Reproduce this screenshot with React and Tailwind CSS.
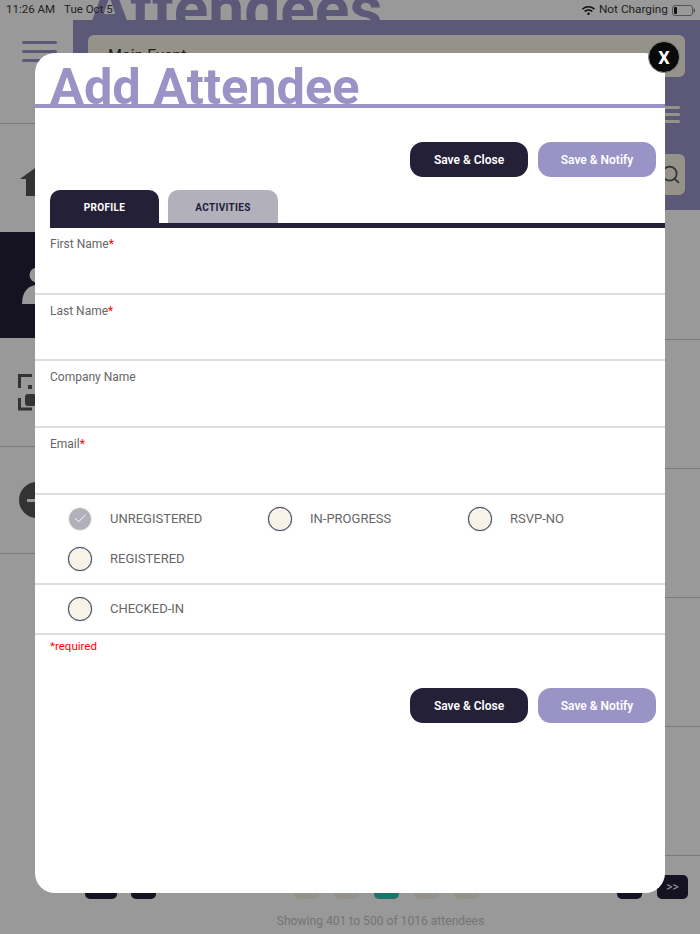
import { Check, Search } from "lucide-react";
import { FaWifi } from "react-icons/fa";

const leftStatuses = ["UNREGISTERED", "IN-PROGRESS", "RSVP-NO", "REGISTERED"];

function HomeIcon() {
  return (
    <svg width="52" height="36" viewBox="0 0 52 36" className="text-[#555]">
      <path d="M26 0 L52 19 L46 19 L46 36 L6 36 L6 19 L0 19 Z" fill="currentColor" />
    </svg>
  );
}

function PersonIcon() {
  return (
    <svg width="30" height="37" viewBox="0 0 30 37" className="text-white">
      <circle cx="15" cy="8" r="7.5" fill="currentColor" />
      <path d="M0 37 C0 24 7 18 15 18 C23 18 30 24 30 37 Z" fill="currentColor" />
    </svg>
  );
}

function ScanIcon() {
  return (
    <svg width="36" height="37" viewBox="0 0 36 37" className="text-[#555]">
      <path d="M1.5 14 V1.5 H14" fill="none" stroke="currentColor" strokeWidth="3" />
      <path d="M1.5 24 V35 H14" fill="none" stroke="currentColor" strokeWidth="3" />
      <rect x="10" y="11" width="4" height="4" fill="currentColor" />
      <rect x="7" y="20" width="11" height="12" rx="3" fill="currentColor" />
    </svg>
  );
}

function MinusIcon() {
  return (
    <div className="flex h-9 w-9 items-center justify-center rounded-full bg-[#555]">
      <div className="h-[3px] w-5 bg-white" />
    </div>
  );
}

function Sidebar() {
  return (
    <div className="flex w-[73px] flex-col">
      <div className="flex h-[104px] flex-col gap-[6px] border-b border-[#ccc] pl-[22px] pt-[21px]">
        <div className="h-[3px] w-[35px] rounded-full bg-[#9a93c6]" />
        <div className="h-[3px] w-[35px] rounded-full bg-[#9a93c6]" />
        <div className="h-[3px] w-[35px] rounded-full bg-[#9a93c6]" />
      </div>
      <div className="flex h-[108px] items-center pl-[20px]">
        <HomeIcon />
      </div>
      <div className="flex h-[106px] items-center bg-[#242038] pl-[22px]">
        <PersonIcon />
      </div>
      <div className="flex h-[109px] items-center border-b border-[#ccc] pl-[18px]">
        <ScanIcon />
      </div>
      <div className="flex h-[107px] items-center border-b border-[#ccc] pl-[19px]">
        <MinusIcon />
      </div>
    </div>
  );
}

function PageButton({ className, children }) {
  return (
    <div className={`flex h-6 items-center justify-center rounded-[5px] text-[12px] ${className}`}>
      {children}
    </div>
  );
}

function Backdrop() {
  return (
    <div className="flex min-h-[934px] flex-col bg-white">
      <h1 className="h-5 pl-[88px] text-[64px] font-bold leading-[20px] text-[#9a93c6]">Attendees</h1>
      <div className="flex">
        <Sidebar />
        <div className="flex flex-1 flex-col">
          <div className="flex h-[190px] flex-col bg-[#9a93c6] px-[15px] pt-[15px]">
            <div className="flex h-[42px] items-center rounded-[6px] bg-[#f8f3e7] pl-5 text-[16px] text-[#333]">
              Main Event
            </div>
            <div className="mt-[29px] flex flex-col items-end gap-[4px] pr-[5px]">
              <div className="h-[3px] w-[30px] rounded-full bg-[#f8f3e7]" />
              <div className="h-[3px] w-[30px] rounded-full bg-[#f8f3e7]" />
              <div className="h-[3px] w-[30px] rounded-full bg-[#f8f3e7]" />
            </div>
            <div className="mt-[31px] flex h-[41px] items-center justify-end rounded-[6px] bg-[#f8f3e7] pr-[4px]">
              <Search className="h-[21px] w-[21px] text-[#555]" />
            </div>
          </div>
          <div className="h-[130px] border-b border-[#ccc]" />
          <div className="h-[129px] border-b border-[#ccc]" />
          <div className="h-[129px] border-b border-[#ccc]" />
          <div className="h-[129px] border-b border-[#ccc]" />
          <div className="h-[129px] border-b border-[#ccc]" />
          <div className="mx-[12px] mt-[19px] flex justify-between">
            <div className="flex gap-[14px]">
              <PageButton className="w-8 bg-[#242038]" />
              <PageButton className="w-[25px] bg-[#242038]" />
            </div>
            <div className="flex gap-[15px]">
              <PageButton className="w-[25px] bg-[#f8f3e7]" />
              <PageButton className="w-[25px] bg-[#f8f3e7]" />
              <PageButton className="w-[25px] bg-[#2fc4b2]" />
              <PageButton className="w-[25px] bg-[#f8f3e7]" />
              <PageButton className="w-[25px] bg-[#f8f3e7]" />
            </div>
            <div className="flex gap-[15px]">
              <PageButton className="w-[25px] bg-[#242038]" />
              <PageButton className="w-[31px] bg-[#242038] text-white">&gt;&gt;</PageButton>
            </div>
          </div>
          <p className="mt-[15px] pr-[12px] text-center text-[12.1px] leading-[15px] text-[#c3c3c3]">
            Showing 401 to 500 of 1016 attendees
          </p>
        </div>
      </div>
    </div>
  );
}

function StatusBar() {
  return (
    <div className="absolute inset-x-0 top-0 flex h-5 items-center justify-between pl-[6px] pr-[5px] text-[11.5px] text-[#222]">
      <div className="flex gap-[9px]">
        <span>11:26 AM</span>
        <span>Tue Oct 5</span>
      </div>
      <div className="flex items-center gap-[4px]">
        <FaWifi className="h-[13px] w-[13px] text-[#111]" />
        <span className="text-[11.8px]">Not Charging</span>
        <svg width="23" height="11" viewBox="0 0 23 11">
          <rect x="0.5" y="0.5" width="20" height="10" rx="2.5" fill="none" stroke="#555" />
          <rect x="2" y="2" width="3" height="7" rx="1" fill="#111" />
          <rect x="21.5" y="3.5" width="1.5" height="4" rx="0.7" fill="#555" />
        </svg>
      </div>
    </div>
  );
}

function ActionButtons() {
  return (
    <div className="flex justify-end gap-[10px] pr-[9px]">
      <button className="h-[35px] w-[118px] rounded-[13px] bg-[#242038] pt-[1px] text-[12px] font-semibold text-white">
        Save &amp; Close
      </button>
      <button className="h-[35px] w-[118px] rounded-[13px] bg-[#9a93c6] pt-[1px] text-[12px] font-semibold text-white">
        Save &amp; Notify
      </button>
    </div>
  );
}

function Field({ label, required }) {
  return (
    <div className="h-[66.7px] border-b-2 border-[#ddd] pl-[15px] pt-[8px] text-[12px] leading-[16px] text-[#666]">
      {label}
      {required && <span className="text-[#f00]">*</span>}
    </div>
  );
}

function StatusOption({ label, checked }) {
  return (
    <div className="flex h-10 items-center gap-[18px] pl-[33px] text-[13px] text-[#666]">
      {checked ? (
        <div className="flex h-6 w-6 items-center justify-center rounded-full border border-[#f8f3e7] bg-[#b1b0bb]">
          <Check className="h-[15px] w-[15px] text-white" strokeWidth={1.5} />
        </div>
      ) : (
        <div className="h-6 w-6 rounded-full border border-[#4a4666] bg-[#f8f3e7] shadow-[0_0_1px_#5c5878]" />
      )}
      {label}
    </div>
  );
}

function AddAttendeeModal() {
  return (
    <div className="absolute left-[35px] top-[53px] h-[840px] w-[630px] rounded-[20px] bg-white">
      <div className="h-[55px] border-b-4 border-[#9a93c6] pl-[15px]">
        <h2 className="text-[50.5px] font-bold leading-[67px] text-[#9a93c6]">Add Attendee</h2>
      </div>
      <div className="mt-[34px]">
        <ActionButtons />
      </div>
      <div className="mt-[13px] flex gap-[9px] pl-[15px]">
        <div className="flex h-[33px] w-[109px] items-center justify-center rounded-t-[10px] bg-[#242038] pt-[1px] text-[10px] font-bold tracking-[0.3px] text-white">
          PROFILE
        </div>
        <div className="flex h-[33px] w-[110px] items-center justify-center rounded-t-[10px] bg-[#b1b0bb] pt-[1px] text-[10px] font-bold tracking-[0.3px] text-[#242038]">
          ACTIVITIES
        </div>
      </div>
      <div className="ml-[15px] h-[5px] bg-[#242038]" />
      <Field label="First Name" required />
      <Field label="Last Name" required />
      <Field label="Company Name" />
      <Field label="Email" required />
      <div className="grid h-[90px] grid-cols-[200px_200px_200px] content-start border-b-2 border-[#ddd] pt-[4px]">
        {leftStatuses.map((status, i) => (
          <StatusOption key={status} label={status} checked={i === 0} />
        ))}
      </div>
      <div className="flex h-[50px] items-center border-b-2 border-[#ddd]">
        <StatusOption label="CHECKED-IN" />
      </div>
      <p className="pl-[15px] pt-[3px] text-[11.5px] leading-[16px] text-[#f00]">*required</p>
      <div className="mt-[34px]">
        <ActionButtons />
      </div>
    </div>
  );
}

export default function App() {
  return (
    <div className="relative h-[934px] w-[700px] overflow-hidden font-['Roboto',sans-serif]">
      <Backdrop />
      <div className="absolute inset-0 bg-black/40" />
      <StatusBar />
      <AddAttendeeModal />
      <div className="absolute left-[648px] top-[41px] flex h-8 w-8 items-center justify-center rounded-full border border-[#888] bg-[#0a0a0a] text-[18px] font-bold text-white">
        X
      </div>
    </div>
  );
}
